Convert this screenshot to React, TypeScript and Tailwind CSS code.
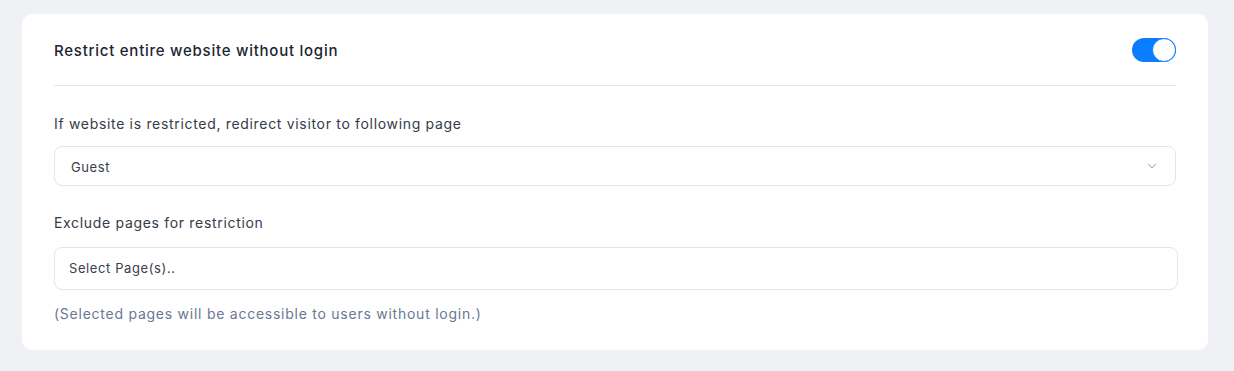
import { ChevronDown } from "lucide-react";

// Settings panel: restrict site access
export default function App() {
  return (
    <div
      className="min-h-[371px] w-full bg-[#f0f1f5] pl-[22px] pr-[26px] pt-[14px] pb-[21px]"
      style={{ fontFamily: "Inter, 'Noto Sans', sans-serif" }}
    >
      <div className="rounded-[10px] bg-white px-8 pb-[26px]">
        {/* Header */}
        <div className="flex h-[72px] items-center justify-between border-b border-[#e4e6ea] pt-[1px]">
          <h2 className="mt-[3px] text-[15px] font-medium tracking-[0.75px] text-[#1d2433]">
            Restrict entire website without login
          </h2>
          <button className="relative flex h-6 w-11 items-center rounded-full bg-[#0a7cff]">
            <span className="absolute right-0 top-0 h-6 w-6 rounded-full border-[1.5px] border-[#0a7cff] bg-white" />
          </button>
        </div>

        {/* Redirect page */}
        <label className="mt-[28px] block text-[14px] leading-5 tracking-[0.68px] text-[#353b48]">
          If website is restricted, redirect visitor to following page
        </label>
        <div className="mt-[12px] flex h-10 items-center justify-between rounded-lg border border-[#e3e5e9] pl-4 pr-4 pt-1">
          <span className="text-[13px] tracking-[0.6px] text-[#3a404c]">Guest</span>
          <ChevronDown size={14} className="-mt-1 text-[#a0a5ae]" strokeWidth={1.75} />
        </div>

        {/* Exclude pages */}
        <label className="mt-[27px] block text-[14px] leading-5 tracking-[0.68px] text-[#353b48]">
          Exclude pages for restriction
        </label>
        <div className="-mr-[2px] mt-[14px] flex h-[43px] items-center rounded-lg border border-[#e3e5e9] pl-[14px]">
          <span className="text-[13px] tracking-[0.6px] text-[#3a404c]">Select Page(s)..</span>
        </div>
        <p className="mt-[14px] text-[14px] leading-5 tracking-[0.75px] text-[#6b7894]">
          (Selected pages will be accessible to users without login.)
        </p>
      </div>
    </div>
  );
}
